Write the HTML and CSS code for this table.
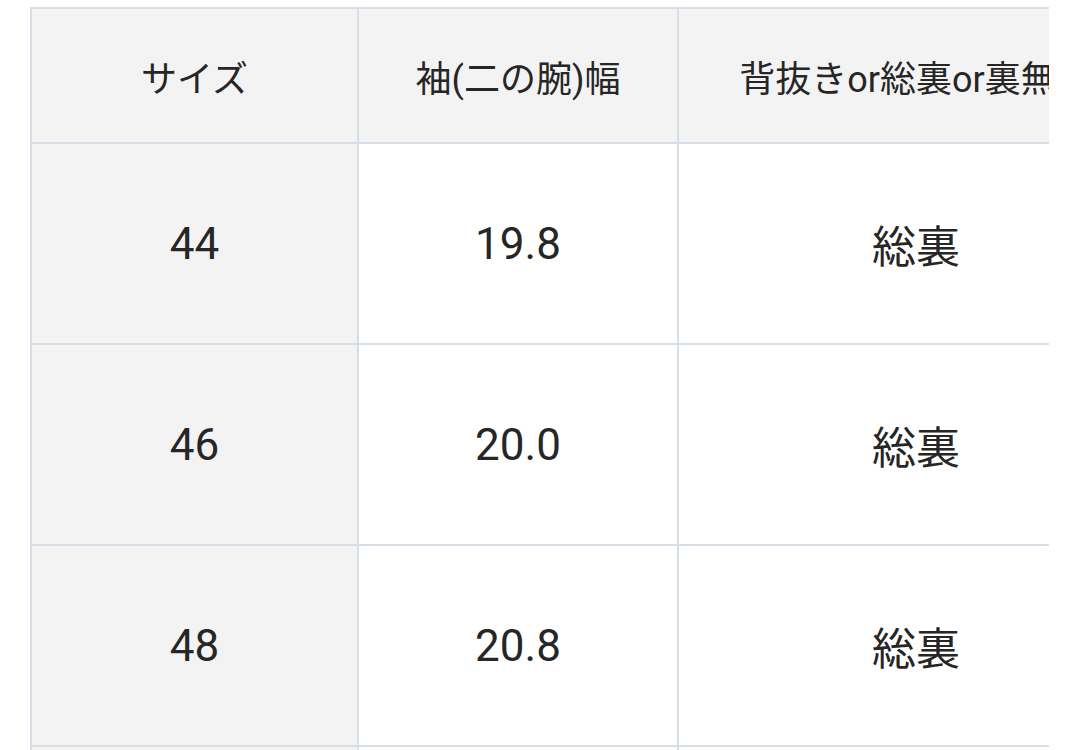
FILE: index.html
```html
<!DOCTYPE html>
<html lang="ja">
<head>
<meta charset="utf-8">
<title>サイズ表</title>
<link rel="stylesheet" href="styles.css">
</head>
<body>
<div class="scroller">
  <table class="size-table">
    <colgroup>
      <col class="c1"><col class="c2"><col class="c3">
    </colgroup>
    <thead>
      <tr>
        <th>サイズ</th>
        <th>袖(二の腕)幅</th>
        <th>背抜きor総裏or裏無し</th>
      </tr>
    </thead>
    <tbody>
      <tr><th>44</th><td>19.8</td><td>総裏</td></tr>
      <tr><th>46</th><td>20.0</td><td>総裏</td></tr>
      <tr><th>48</th><td>20.8</td><td>総裏</td></tr>
      <tr><th>50</th><td>21.2</td><td>総裏</td></tr>
    </tbody>
  </table>
</div>
</body>
</html>
```
FILE: styles.css
```css
html, body {
  margin: 0;
  padding: 0;
  background: #ffffff;
}
body {
  font-family: Roboto, "Noto Sans CJK JP", sans-serif;
  color: #262626;
}
.scroller {
  margin: 7px 0 0 30px;
  width: 1019px;
  overflow: hidden;
}
.size-table {
  border-collapse: collapse;
  table-layout: fixed;
  width: 1123px;
}
.c1 { width: 327px; }
.c2 { width: 320px; }
.c3 { width: 476px; }
.size-table th,
.size-table td {
  border: 2px solid #d8dee7;
  text-align: center;
  vertical-align: middle;
  padding: 0;
  font-weight: 400;
  white-space: nowrap;
}
.size-table thead th {
  height: 133px;
  background: #f3f3f3;
  font-size: 36px;
}
.size-table tbody th,
.size-table tbody td {
  height: 199px;
  font-size: 44px;
}
.size-table tbody th {
  background: #f3f3f3;
}
.size-table tbody td {
  background: #ffffff;
}
```
